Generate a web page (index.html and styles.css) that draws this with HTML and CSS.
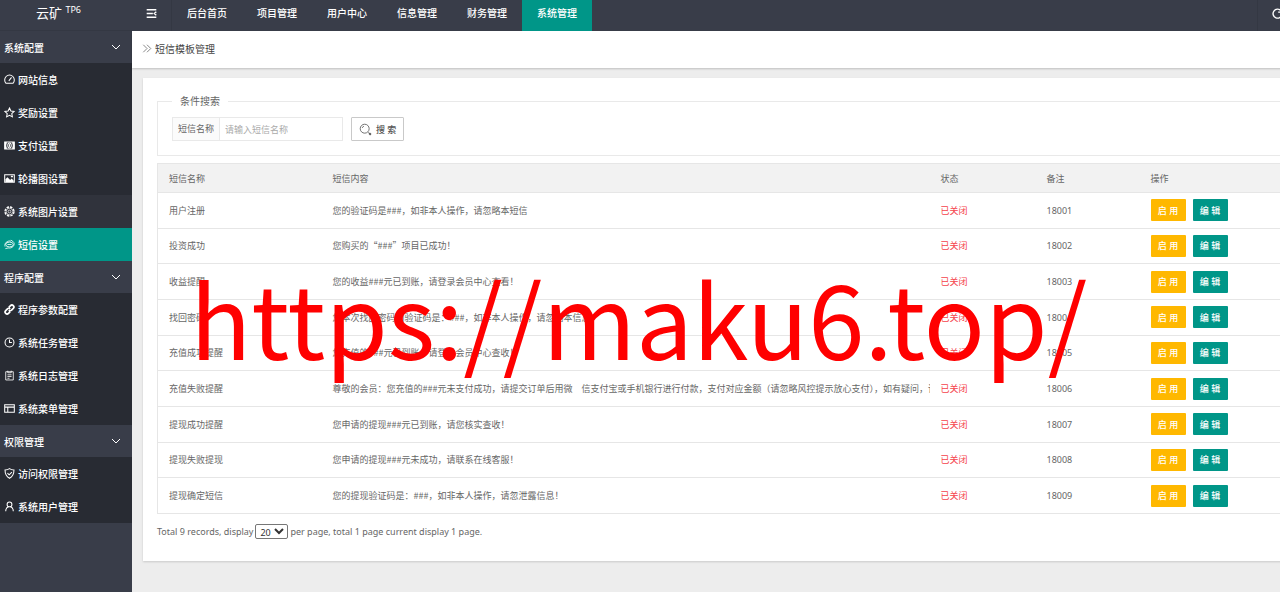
FILE: index.html
```
<!DOCTYPE html>
<html lang="zh-CN">
<head>
  <meta charset="UTF-8">
  <meta name="viewport" content="width=device-width, initial-scale=1.0">
  <title>短信模板管理</title>
  <link rel="stylesheet" href="styles.css">
</head>
<body>
  <div class="layout">
    <aside class="sidebar">
      <div class="logo">云矿 <sup>TP6</sup></div>
      <nav class="menu">
        <button class="menu-head">系统配置 <svg class="arrow" viewBox="0 0 10 10"><path d="M1 3l4 4 4-4"/></svg></button>
        <a href="#"><svg class="icon" viewBox="0 0 16 16"><path d="M3 13.500a7 7 0 1 1 10 0zM7 10l4-5"/></svg>网站信息</a>
        <a href="#"><svg class="icon" viewBox="0 0 16 16"><path d="M8 1.500l2 4.300 4.700.6-3.400 3.200.9 4.700L8 12l-4.200 2.300.9-4.700L1.300 6.400 6 5.800z"/></svg>奖励设置</a>
        <a href="#"><svg class="icon" viewBox="0 0 16 16"><path d="M1 3h14v10H1z"/><path class="solid" d="M1 3h3v2c-1 2-1 4 0 6v2H1zM15 3h-3v2c1 2 1 4 0 6v2h3z"/><ellipse cx="8" cy="8" rx="2.500" ry="3.500"/><path d="M8 6v4"/></svg>支付设置</a>
        <a href="#"><svg class="icon" viewBox="0 0 16 16"><path d="M1 2.500h14v11H1z"/><path class="solid" d="M2 13V9l3-3 4 4 2-2 3 3v2zM10 4h3v2h-3z"/></svg>轮播图设置</a>
        <a href="#" class="hover"><svg class="icon" viewBox="0 0 16 16"><circle cx="8" cy="8" r="6.500" stroke-dasharray="3.600 1.500" stroke-width="2"/><circle cx="8" cy="8" r="4.800" stroke-width="1"/><circle cx="8" cy="8" r="2" stroke-width="1"/></svg>系统图片设置</a>
        <a href="#" class="active"><svg class="icon thin" viewBox="0 0 16 16"><path d="M1.500 11C0 6 5 2 10 3M14.500 5c1.500 5-3 9-8.500 8M10 1.500l4 3M2 14l4-1"/><ellipse cx="8" cy="8" rx="5.500" ry="3.500"/><path d="M5 8h6"/></svg>短信设置</a>

        <button class="menu-head">程序配置 <svg class="arrow" viewBox="0 0 10 10"><path d="M1 3l4 4 4-4"/></svg></button>
        <a href="#"><svg class="icon bold" viewBox="0 0 16 16"><path d="M7 5l2.500-2.500a2.800 2.800 0 0 1 4 4L11 9a2.800 2.800 0 0 1-4 0M9 11l-2.500 2.500a2.800 2.800 0 0 1-4-4L5 7a2.800 2.800 0 0 1 4 0"/></svg>程序参数配置</a>
        <a href="#"><svg class="icon" viewBox="0 0 16 16"><circle cx="8" cy="8" r="6.500"/><path d="M8 3.500V8h3.500"/></svg>系统任务管理</a>
        <a href="#"><svg class="icon thin" viewBox="0 0 16 16"><path d="M2.500 2.500h11v12h-11zM5.500 1v3h5V1M5 7h6M5 9.500h6M5 12h3"/></svg>系统日志管理</a>
        <a href="#"><svg class="icon" viewBox="0 0 16 16"><path d="M1 2.500h14v11H1zM1 6h14M5.500 6v7"/></svg>系统菜单管理</a>

        <button class="menu-head">权限管理 <svg class="arrow" viewBox="0 0 10 10"><path d="M1 3l4 4 4-4"/></svg></button>
        <a href="#"><svg class="icon" viewBox="0 0 16 16"><path d="M8 1c2 1.500 4 2 6.500 2 0 6-1 9-6.500 12C2.500 12 1.500 9 1.500 3 4 3 6 2.500 8 1zM5 7.500l2.500 2.500L11.500 6"/></svg>访问权限管理</a>
        <a href="#"><svg class="icon" viewBox="0 0 16 16"><circle cx="8" cy="5" r="3.500"/><path d="M2.500 15c0-4 2-6 4-6.500M13.500 15c0-4-2-6-4-6.500"/></svg>系统用户管理</a>
      </nav>
    </aside>

    <div class="body">
      <header class="topbar">
        <button class="toggle" aria-label="菜单"><svg class="icon" viewBox="0 0 16 16"><path d="M1 2.500h14M1 8h9M1 13.500h14M15 5.500L12 8l3 2.500"/></svg></button>
        <nav class="topnav">
          <a href="#">后台首页</a>
          <a href="#">项目管理</a>
          <a href="#">用户中心</a>
          <a href="#">信息管理</a>
          <a href="#">财务管理</a>
          <a href="#" class="active">系统管理</a>
        </nav>
        <button class="refresh" aria-label="刷新"><svg class="icon" viewBox="0 0 16 16"><path d="M13 4a6.500 6.500 0 1 0 1.500 5M14 1v5H9"/></svg></button>
      </header>

      <div class="crumb">
        <svg class="icon" viewBox="0 0 16 16"><path d="M2 2l6 6-6 6M8 2l6 6-6 6"/></svg>
        <span>短信模板管理</span>
      </div>

      <main class="card">
        <fieldset class="search">
          <legend>条件搜索</legend>
          <form class="search-form">
            <div class="field">
              <label for="name">短信名称</label>
              <input type="text" id="name" placeholder="请输入短信名称">
            </div>
            <button type="button" class="search-btn">
              <svg viewBox="0 0 16 16"><circle cx="7" cy="7" r="5.500"/><path d="M4 6a3 3 0 0 1 2-2M11.500 11.500l1 1"/><path class="handle" d="M12.500 12.500l2 2"/></svg>
              搜 索
            </button>
          </form>
        </fieldset>

        <table class="list">
          <colgroup>
            <col class="col-name">
            <col class="col-content">
            <col class="col-status">
            <col class="col-remark">
            <col>
          </colgroup>
          <thead>
            <tr><th>短信名称</th><th>短信内容</th><th>状态</th><th>备注</th><th>操作</th></tr>
          </thead>
          <tbody>
            <tr><td>用户注册</td><td class="content">您的验证码是###，如非本人操作，请忽略本短信</td><td class="off">已关闭</td><td>18001</td><td><button class="btn warn">启 用</button><button class="btn">编 辑</button></td></tr>
            <tr><td>投资成功</td><td class="content">您购买的“###”项目已成功！</td><td class="off">已关闭</td><td>18002</td><td><button class="btn warn">启 用</button><button class="btn">编 辑</button></td></tr>
            <tr><td>收益提醒</td><td class="content">您的收益###元已到账，请登录会员中心查看！</td><td class="off">已关闭</td><td>18003</td><td><button class="btn warn">启 用</button><button class="btn">编 辑</button></td></tr>
            <tr><td>找回密码</td><td class="content">您本次找回密码的验证码是：###，如非本人操作，请忽略本信息</td><td class="off">已关闭</td><td>18004</td><td><button class="btn warn">启 用</button><button class="btn">编 辑</button></td></tr>
            <tr><td>充值成功提醒</td><td class="content">您充值的###元已到账，请登录会员中心查收！</td><td class="off">已关闭</td><td>18005</td><td><button class="btn warn">启 用</button><button class="btn">编 辑</button></td></tr>
            <tr><td>充值失败提醒</td><td class="content">尊敬的会员：您充值的###元未支付成功，请提交订单后用微&emsp;信支付宝或手机银行进行付款，支付对应金额（请忽略风控提示放心支付），如有疑问，请咨询在线客服！</td><td class="off">已关闭</td><td>18006</td><td><button class="btn warn">启 用</button><button class="btn">编 辑</button></td></tr>
            <tr><td>提现成功提醒</td><td class="content">您申请的提现###元已到账，请您核实查收！</td><td class="off">已关闭</td><td>18007</td><td><button class="btn warn">启 用</button><button class="btn">编 辑</button></td></tr>
            <tr><td>提现失败提现</td><td class="content">您申请的提现###元未成功，请联系在线客服！</td><td class="off">已关闭</td><td>18008</td><td><button class="btn warn">启 用</button><button class="btn">编 辑</button></td></tr>
            <tr><td>提现确定短信</td><td class="content">您的提现验证码是：###，如非本人操作，请忽泄露信息！</td><td class="off">已关闭</td><td>18009</td><td><button class="btn warn">启 用</button><button class="btn">编 辑</button></td></tr>
          </tbody>
        </table>

        <div class="pager">
          <label for="limit">Total 9 records, display</label>
          <select id="limit"><option>20</option><option>50</option></select>
          <span>per page, total 1 page current display 1 page.</span>
        </div>
      </main>
    </div>
  </div>
  <div class="watermark">https://maku6.top/</div>
</body>
</html>
```
FILE: styles.css
```
* {
  box-sizing: border-box;
}
body {
  margin: 0;
  overflow: hidden;
  background-color: #ededed;
  color: #666;
  font-family: "Noto Sans", "Noto Sans CJK SC", sans-serif;
  font-size: 9px;
}
button, input, select {
  font-family: inherit;
  font-size: inherit;
  color: inherit;
}
button {
  border: none;
  padding: 0;
  background: none;
  cursor: pointer;
}
a {
  color: #fff;
  text-decoration: none;
}
svg {
  fill: none;
  stroke: currentColor;
}
.icon {
  width: 11px;
  height: 11px;
  flex: none;
  stroke-width: 1.5;
}
.icon.thin {
  stroke-width: 1.2;
}
.icon.bold {
  stroke-width: 2.5;
}
.solid {
  fill: currentColor;
  stroke: none;
}

/* the page is a little wider than the window */
.layout {
  display: flex;
  width: calc(100% + 17px);
  min-height: 100vh;
}

/* sidebar */
.sidebar {
  width: 132px;
  flex: none;
  background-color: #393d49;
  color: #fff;
  font-size: 10px;
  font-weight: 500;
}
.logo {
  height: 31px;
  padding-right: 15px;
  border-bottom: 1px solid #343843;
  text-align: center;
  font-size: 13px;
  font-weight: 400;
  line-height: 26px;
}
.logo sup {
  font-size: 9px;
  line-height: 1;
}
.menu {
  display: flex;
  flex-direction: column;
}
.menu-head {
  display: flex;
  align-items: center;
  justify-content: space-between;
  height: 32px;
  padding: 0 11px 0 4px;
  font-weight: 500;
}
.arrow {
  width: 10px;
  height: 10px;
}
.menu a {
  display: flex;
  align-items: center;
  gap: 3px;
  height: 33px;
  padding: 0 4px;
  background-color: #282b33;
}
.menu a.hover {
  background-color: #30333c;
}
.menu a.active, .topnav .active {
  background-color: #009688;
}

/* top bar */
.body {
  flex: 1;
  min-width: 0;
}
.topbar {
  display: flex;
  height: 31px;
  background-color: #393d49;
  color: #fff;
  font-size: 10px;
  font-weight: 500;
}
.toggle, .refresh {
  display: flex;
  align-items: center;
  justify-content: center;
  width: 40px;
  padding-bottom: 4px;
}
.toggle {
  border-right: 1px solid #343843;
}
.toggle .icon, .refresh .icon {
  stroke-width: 2;
}
.refresh {
  margin-left: auto;
  border-left: 1px solid #343843;
}
.topnav {
  display: flex;
}
.topnav a {
  padding: 0 15px;
  line-height: 27px;
}
.crumb {
  display: flex;
  align-items: center;
  gap: 3px;
  height: 37px;
  padding: 0 10px 2px;
  background-color: #fff;
  box-shadow: 0 1px 2px rgba(0,0,0,0.2);
  color: #444;
  font-size: 10px;
}
.crumb .icon {
  width: 10px;
  stroke-width: 1;
}

/* content */
.card {
  margin: 10px 0 0 11px;
  padding: 15px 0 22px 14px;
  background-color: #fff;
  box-shadow: 0 1px 2px rgba(0,0,0,0.15);
}
.search {
  margin: 0 0 7px;
  padding: 8px 15px 14px 14px;
  border: 1px solid #e9e9e9;
}
.search legend {
  padding: 0 8px;
  font-size: 10px;
  line-height: 16px;
}
.search-form {
  display: flex;
  gap: 8px;
}
.field {
  display: flex;
  width: 171px;
  height: 24px;
  border: 1px solid #e9e9e9;
}
.field label {
  flex: none;
  padding: 0 5px;
  border-right: 1px solid #e9e9e9;
  background-color: #fbfbfb;
  line-height: 22px;
}
.field input {
  flex: 1;
  min-width: 0;
  padding: 0 5px;
  border: none;
}
.field input::placeholder {
  color: #aaa;
}
.search-btn {
  display: flex;
  align-items: center;
  gap: 4px;
  height: 24px;
  padding: 0 7px;
  border: 1px solid #c9c9c9;
  border-radius: 1px;
  color: #555;
  font-weight: 500;
}
.search-btn svg {
  width: 13px;
  height: 13px;
}
.search-btn .handle {
  stroke-width: 2.5;
}
.list {
  width: 100%;
  height: 351px;
  table-layout: fixed;
  border-collapse: collapse;
  border: 1px solid #e6e6e6;
}
.col-name {
  width: 164px;
}
.col-content {
  width: 608px;
}
.col-status {
  width: 106px;
}
.col-remark {
  width: 104px;
}
.list th, .list td {
  height: 35px;
  padding: 0 11px;
  border-bottom: 1px solid #e6e6e6;
  text-align: left;
  font-weight: 400;
  white-space: nowrap;
  overflow: hidden;
}
.list th {
  height: 29px;
  background-color: #f2f2f2;
}
.list .content {
  font-family: "Noto Sans CJK SC", sans-serif;
}
.list .off {
  color: #f5424b;
}
.btn {
  width: 35px;
  height: 22px;
  border-radius: 1px;
  background-color: #009688;
  color: #fff;
  font-weight: 500;
  vertical-align: middle;
}
.btn.warn {
  margin-right: 7px;
  background-color: #ffb800;
}
.pager {
  display: flex;
  align-items: center;
  gap: 2px;
  margin-top: 10px;
}
.pager select {
  width: 33px;
  height: 15px;
  padding: 0;
  border: 1px solid #767676;
  border-radius: 2px;
  background-color: #fff;
  color: #333;
}

.watermark {
  position: absolute;
  top: 236px;
  left: 190px;
  color: #f00;
  font-family: "Noto Sans CJK SC", sans-serif;
  font-size: 101px;
  line-height: 160px;
  white-space: nowrap;
  pointer-events: none;
}
```
